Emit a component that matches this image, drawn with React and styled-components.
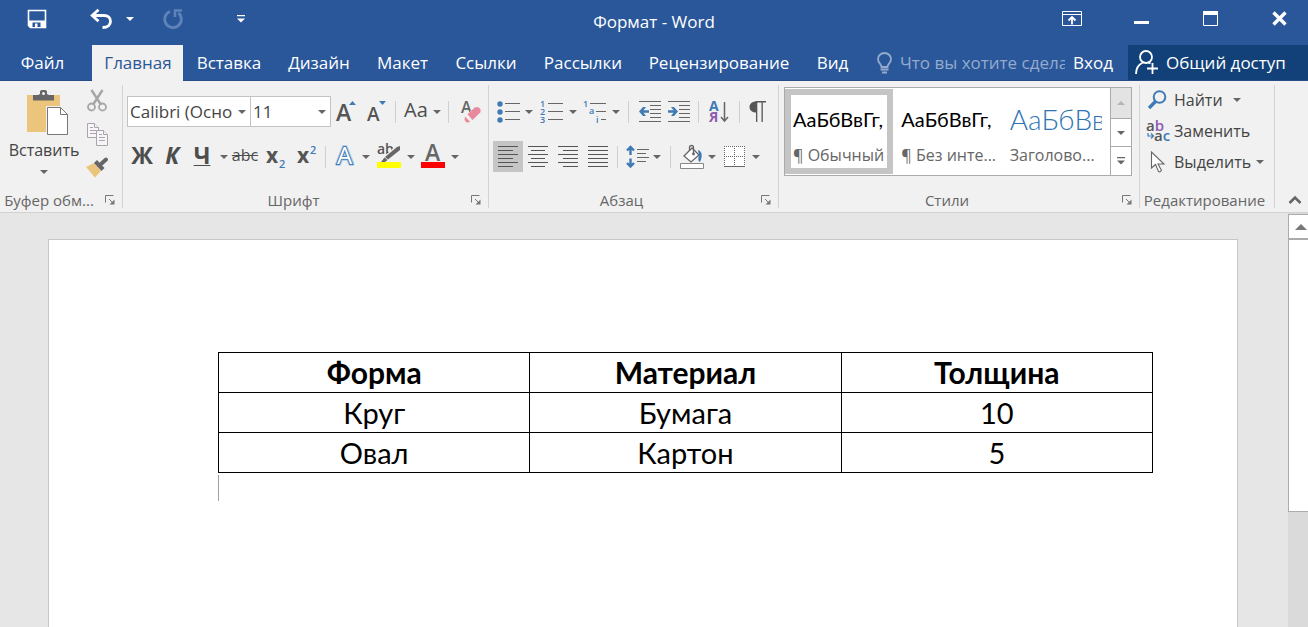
import { useState } from 'react';
import styled, { createGlobalStyle, css } from 'styled-components';

const GlobalStyle = createGlobalStyle`
    * {
        box-sizing: border-box;
    }

    body {
        margin: 0;
        font-family: 'Open Sans', 'Noto Sans', sans-serif;
        font-size: 16px;
        color: #444444;
    }

    button,
    input,
    select {
        margin: 0;
        padding: 0;
        border: 0;
        background: none;
        color: inherit;
        font: inherit;
    }

    svg {
        flex: none;
        overflow: visible;
    }
`;

const Window = styled.div`
    display: flex;
    flex-direction: column;
    height: 100vh;
    overflow: hidden;
    background: #e6e6e6;
`;

const TitleBar = styled.header`
    display: grid;
    grid-template-columns: 1fr auto 1fr;
    align-items: center;
    flex: none;
    height: 45px;
    padding-bottom: 8px;
    background: #2a579a;
    color: #ffffff;
`;

const Title = styled.h1`
    margin: 0;
    padding-top: 6px;
    font-size: 17px;
    font-weight: 400;
`;

const QuickAccess = styled.div`
    display: flex;
    align-items: center;
    padding-left: 20px;
`;

const WindowControls = styled.div`
    display: flex;
    justify-content: flex-end;
    gap: 11px;
`;

const IconButton = styled.button`
    display: flex;
    align-items: center;
    justify-content: center;
    flex: none;
    width: ${({ $width }) => $width}px;
    height: 32px;
    margin-right: ${({ $space = 0 }) => $space}px;
`;

const TabBar = styled.nav`
    display: flex;
    flex: none;
    height: 36px;
    background: #2a579a;
    border-bottom: 1px solid #244c88;
    color: #ffffff;
    font-size: 17px;
`;

const Tab = styled.button`
    flex: none;
    width: ${({ $width }) => $width}px;
    height: 36px;
    padding: 0 0 2px 1px;
    white-space: nowrap;

    &:first-child {
        margin-right: 8px;
    }

    ${({ $active }) =>
        $active &&
        css`
            background: #f1f1f1;
            color: #2a579a;
        `}
`;

const TellMe = styled.label`
    display: flex;
    flex: 1;
    align-items: center;
    gap: 7px;
    min-width: 0;
    padding-left: 14px;
`;

const TellMeInput = styled.input`
    flex: 1;
    width: 0;
    min-width: 0;
    outline: 0;

    &::placeholder {
        color: #94abcc;
        opacity: 1;
    }
`;

const SignIn = styled.button`
    flex: none;
    width: 56px;
`;

const Share = styled.button`
    display: flex;
    align-items: center;
    gap: 8px;
    flex: none;
    width: 180px;
    margin-left: 7px;
    padding-left: 7px;
    background: #124078;
    white-space: nowrap;
`;

const Ribbon = styled.section`
    display: flex;
    flex: none;
    height: 132px;
    padding: 4px 0;
    background: #f1f1f1;
    border-bottom: 1px solid #d2d2d2;
`;

const Group = styled.div`
    display: flex;
    flex-direction: column;
    justify-content: space-between;
    flex: ${({ $grow }) => ($grow ? '1 1 0' : 'none')};
    width: ${({ $width }) => $width}px;
    min-width: 0;
    border-right: 1px solid #d4d4d4;
`;

const GroupFooter = styled.div`
    display: flex;
    align-items: center;
    height: 16px;
    padding: 0 7px 0 2px;
    color: #666666;
    font-size: 15px;
    line-height: 16px;
`;

const GroupName = styled.span`
    flex: 1;
    text-align: center;
    white-space: nowrap;
`;

const Launcher = styled.button`
    display: flex;
    align-items: center;
    justify-content: flex-end;
    width: 19px;
    height: 16px;
`;

const Rows = styled.div`
    display: flex;
    flex-direction: column;
    gap: 14px;
    padding: 11px 0 0 4px;
`;

const Row = styled.div`
    display: flex;
    align-items: center;
    height: 31px;
`;

const Tool = styled.button`
    display: flex;
    align-items: center;
    justify-content: center;
    flex: none;
    width: ${({ $width = 30 }) => $width}px;
    height: 31px;
    background: ${({ $pressed }) => ($pressed ? '#c5c5c5' : 'none')};
    white-space: nowrap;
`;

const Separator = styled.span`
    display: flex;
    justify-content: center;
    flex: none;
    width: ${({ $width }) => $width}px;

    &::before {
        content: '';
        width: 1px;
        height: 22px;
        background: #d0d0d0;
    }
`;

const ComboBox = styled.label`
    display: grid;
    grid-template-columns: 1fr 17px;
    align-items: center;
    flex: none;
    width: ${({ $width }) => $width}px;
    height: 31px;
    margin-right: -1px;
    background: #ffffff;
    border: 1px solid #c3c3c3;
`;

const ComboSelect = styled.select`
    grid-area: 1 / 1 / 2 / 3;
    width: 100%;
    height: 29px;
    padding-left: 2px;
    appearance: none;
    font-size: 17px;
`;

const ComboArrow = styled.span`
    display: flex;
    justify-content: center;
    grid-area: 1 / 2;
    pointer-events: none;
`;

const Glyph = styled.span`
    padding-bottom: 3px;
    font-size: ${({ $size = 23 }) => $size}px;
    font-weight: ${({ $weight = 700 }) => $weight};
    font-style: ${({ $italic }) => ($italic ? 'italic' : 'normal')};
    text-decoration: ${({ $line = 'none' }) => $line};
    text-decoration-thickness: 1px;
    line-height: 28px;
    color: #4d4d4d;
`;

const Clipboard = styled.div`
    display: flex;
`;

const PasteButton = styled.button`
    display: flex;
    flex-direction: column;
    align-items: center;
    width: 84px;
    padding: 5px 0 0 4px;
    line-height: 30px;
`;

const PasteArrow = styled.span`
    display: flex;
    align-items: center;
    height: 14px;
`;

const ClipboardTools = styled.div`
    display: flex;
    flex-direction: column;
    align-items: center;
    gap: 1px;
    width: 26px;
`;

const Gallery = styled.div`
    display: flex;
    height: 89px;
    margin: 2px 7px 0 5px;
    background: #ffffff;
    border: 1px solid #ababab;
`;

const GalleryItem = styled.button`
    flex: 1 1 0;
    min-width: 0;
    height: 85px;
    margin-top: 1px;
    padding: 0 2px;
    border: 6px solid ${({ $selected }) => ($selected ? '#c5c5c5' : 'transparent')};
    text-align: left;
`;

const Preview = styled.div`
    overflow: hidden;
    height: 48px;
    color: ${({ $heading }) => ($heading ? '#2e74b5' : '#000000')};
    font-family: 'Lato', 'Open Sans', sans-serif;
    font-size: ${({ $heading }) => ($heading ? 28 : 20)}px;
    font-weight: ${({ $heading }) => ($heading ? 300 : 400)};
    line-height: 48px;
    white-space: nowrap;
`;

const StyleName = styled.div`
    color: #666666;
    line-height: 25px;
    white-space: nowrap;
`;

const GalleryNav = styled.div`
    display: grid;
    grid-template-rows: 30px 28px 29px;
    flex: none;
    width: 21px;
    border-left: 1px solid #ababab;
`;

const GalleryNavButton = styled.button`
    display: flex;
    align-items: center;
    justify-content: center;

    &:disabled {
        background: #e3e3e3;
    }

    & + & {
        border-top: 1px solid #ababab;
    }
`;

const EditingList = styled.div`
    display: flex;
    flex-direction: column;
    padding-left: 7px;
`;

const EditingButton = styled.button`
    display: flex;
    align-items: center;
    height: 31px;
    padding-bottom: 2px;
    white-space: nowrap;
`;

const EditingIcon = styled.span`
    display: flex;
    width: 27px;
`;

const EditingArrow = styled.span`
    display: flex;
    margin-left: ${({ $gap }) => $gap}px;
`;

const Collapse = styled.button`
    display: flex;
    align-items: flex-end;
    justify-content: flex-end;
    width: 33px;
    padding: 0 6px 3px 0;
`;

const Workspace = styled.main`
    display: flex;
    flex: 1;
    min-height: 0;
`;

const Canvas = styled.div`
    flex: 1;
    padding: 26px 50px 0 48px;
`;

const Page = styled.article`
    height: 100%;
    padding: 112px 84px 0 169px;
    background: #ffffff;
    border: 1px solid #c6c6c6;
    border-bottom: 0;
`;

const DataTable = styled.table`
    width: 100%;
    border-collapse: collapse;
    table-layout: fixed;
    color: #000000;
    font-family: 'Lato', 'Open Sans', sans-serif;
    font-size: 29px;
    line-height: 39px;

    th,
    td {
        height: 40px;
        padding: 0;
        border: 1px solid #000000;
        text-align: center;
    }

    th {
        font-size: 30px;
    }
`;

const Caret = styled.div`
    width: 1px;
    height: 26px;
    margin-top: 2px;
    background: #a0a0a0;
`;

const ScrollBar = styled.div`
    display: flex;
    flex-direction: column;
    flex: none;
    width: 20px;
    padding-top: 1px;
    background: #dadada;
`;

const ScrollButton = styled.button`
    display: flex;
    align-items: center;
    justify-content: center;
    height: 25px;
    padding-left: 4px;
    background: #ffffff;
    border: 1px solid #ababab;
    border-right: 0;
`;

const ScrollThumb = styled.div`
    height: 66%;
    background: #ffffff;
    border: 1px solid #ababab;
    border-right: 0;
`;

const BLUE = '#3f7ab5';
const GREY = '#666666';

const Arrow = ({ color = GREY, size = 8 }) => (
    <svg width={size} height={size / 2} viewBox="0 0 8 4" fill={color}>
        <path d="M0 0h8L4 4z" />
    </svg>
);

const ArrowTool = ({ width, label }) => (
    <Tool $width={width} aria-label={label}>
        <Arrow />
    </Tool>
);

const SaveIcon = () => (
    <svg width="20" height="20" viewBox="0 0 20 20" fill="none">
        <path d="M1.500 1.500h17v17H3.500l-2-2z" stroke="#fff" strokeWidth="1.600" />
        <path d="M1.500 11.500h17V19H3.500l-2-2z" fill="#fff" />
        <path d="M5.500 13.500h8V18h-8z" fill="#2a579a" />
        <path d="M8 14.500h2.500V19H8z" fill="#fff" />
    </svg>
);

const UndoIcon = () => (
    <svg width="22" height="20" viewBox="0 0 22 20" fill="none" stroke="#fff">
        <path d="M2 6.500h12c4 0 6.500 2.300 6.500 5.700S18 18.500 12.500 18.500" strokeWidth="2.800" />
        <path d="M8.500 0.800L2.200 6.500l6.300 5.700" strokeWidth="2.800" />
    </svg>
);

const RedoIcon = () => (
    <svg width="22" height="22" viewBox="0 0 22 22" fill="none" stroke="#5f83b8">
        <path d="M8 3.500A8.300 8.300 0 1 0 16.500 5" strokeWidth="2.800" />
        <path d="M13 9V2.500h7" strokeWidth="2.600" />
    </svg>
);

const CustomizeIcon = ({ color = '#fff' }) => (
    <svg width="10" height="8" viewBox="0 0 10 8" fill={color}>
        <path d="M1 0h8v1.200H1zM1 3.500h8L5 7.500z" />
    </svg>
);

const RibbonOptionsIcon = () => (
    <svg width="20" height="15" viewBox="0 0 20 15" fill="none" stroke="#fff">
        <path d="M.5.5h19v14H.5zM.5 3.500h19" />
        <path d="M10 13.500V7M6.500 9.500L10 6l3.500 3.500" strokeWidth="1.800" />
    </svg>
);

const MinimizeIcon = () => (
    <svg width="15" height="15" viewBox="0 0 15 15">
        <path d="M0 10h15v3H0z" fill="#fff" />
    </svg>
);

const MaximizeIcon = () => (
    <svg width="15" height="15" viewBox="0 0 15 15" fill="#fff">
        <path d="M.5.5h14v14H.5z" fill="none" stroke="#fff" />
        <path d="M0 0h15v4H0z" />
    </svg>
);

const CloseIcon = () => (
    <svg width="15" height="15" viewBox="0 0 15 15">
        <path d="M1.500 1.500l12 12M13.500 1.500l-12 12" stroke="#fff" strokeWidth="3.400" />
    </svg>
);

const BulbIcon = () => (
    <svg width="17" height="22" viewBox="0 0 17 22" fill="none" stroke="#94abcc" strokeWidth="1.800">
        <path d="M5.500 15c0-3-3.500-4-3.500-8a6.500 6 0 0 1 13 0c0 4-3.500 5-3.500 8z" />
        <path d="M4.500 17.500h8M6 20.500h5" strokeWidth="2" />
    </svg>
);

const ShareIcon = () => (
    <svg width="23" height="25" viewBox="0 0 23 25" fill="none" stroke="#fff" strokeWidth="1.800">
        <ellipse cx="11" cy="7" rx="6" ry="6" />
        <path d="M1 24c0-6 2.500-9.500 7-11.500M13.500 12.500l2 1" />
        <path d="M17.500 13v11M12 18.500h11" />
    </svg>
);

const PasteIcon = () => (
    <svg width="49" height="45" viewBox="-7 0 49 45" fill="none">
        <path d="M0 5h33v37H0z" fill="#ecc57c" />
        <path d="M6 5h5l2-1V1.500Q13 0 15 0h3q2 0 2 1.500V4l2 1h5v5.500H6z" fill={GREY} />
        <circle cx="16.500" cy="3.500" r="1.500" fill="#f1f1f1" />
        <path d="M19 16h16l8 8v21H19z" fill="#f1f1f1" />
        <path d="M20.500 17.500h13l7 7v20h-20z" fill="#fff" stroke="#777" />
        <path d="M33.500 17.500v7h7" stroke="#777" />
    </svg>
);

const CutIcon = () => (
    <svg width="20" height="22" viewBox="0 0 20 22" fill="none" stroke="#a6a6a6">
        <path d="M4.500 0l9 14M15.500 0l-9 14" strokeWidth="2.400" />
        <circle cx="4.500" cy="17" r="3.500" strokeWidth="1.800" />
        <circle cx="15.500" cy="17" r="3.500" strokeWidth="1.800" />
    </svg>
);

const CopyIcon = () => (
    <svg width="21" height="23" viewBox="0 0 21 23" fill="#f7f5f7" stroke="#aaa5ac">
        <path d="M.5.5h7l4 4v10H.5z" />
        <path d="M7.500.5v4h4M3 4.500h3M3 7.500h6M3 10.500h6" />
        <path d="M9.500 7.500h7l4 4v11h-11z" />
        <path d="M16.500 7.500v4h4M12 11.500h3M12 14.500h6M12 17.500h6" />
    </svg>
);

const PainterIcon = () => (
    <svg width="24" height="21" viewBox="0 0 24 21">
        <path d="M1 10l8-4 7 8-6 6.500z" fill="#ecc57c" />
        <path d="M9 6l3-3 7.500 8-3 3z" fill={GREY} />
        <path d="M16 7l5-4.500" stroke={GREY} strokeWidth="4" strokeLinecap="round" />
    </svg>
);

const LauncherIcon = () => (
    <svg width="10" height="10" viewBox="0 0 10 10" fill="none" stroke="#777">
        <path d="M.5 7.500v-7h8M4 4l4 4" />
        <path d="M9.500 4.500v5h-5z" fill="#777" stroke="none" />
    </svg>
);

const GrowFontIcon = ({ shrink }) => (
    <svg width="20" height="24" viewBox="0 0 20 24">
        <text x="0" y="21" fontSize={shrink ? 19 : 23} fontWeight="600" fill="#555">
            A
        </text>
        <path d={shrink ? 'M12 1h7l-3.500 4z' : 'M13 5h7l-3.500-4z'} fill={BLUE} />
    </svg>
);

const EraserIcon = () => (
    <svg width="20" height="23" viewBox="0 0 20 23">
        <text x="0" y="13" fontSize="16" fontWeight="600" fill={GREY}>
            A
        </text>
        <path
            d="M6.500 14.300L14 7.300h3.500l2 2v3l-8 7.700zM4 16.500l5 5-1.500 1H5.500L3.500 20z"
            fill="#e8899c"
            stroke="#f1f1f1"
            strokeWidth="1"
            paintOrder="stroke"
        />
    </svg>
);

const ScriptIcon = ({ sup }) => (
    <svg width="20" height="26" viewBox="0 0 20 26">
        <text x="0" y="19" fontSize="21" fontWeight="700" fill="#555">
            x
        </text>
        <text x="13" y={sup ? 10 : 24} fontSize="11" fontWeight="600" fill={BLUE}>
            2
        </text>
    </svg>
);

const EffectsIcon = () => (
    <svg width="20" height="24" viewBox="0 0 20 24">
        <text
            x="2"
            y="19"
            fontSize="24"
            fill="#fff"
            stroke="#b5d0ec"
            strokeWidth="4"
            strokeLinejoin="round"
            paintOrder="stroke"
        >
            A
        </text>
        <text x="2" y="19" fontSize="24" fill="#fff" stroke={BLUE} strokeWidth="2" paintOrder="stroke">
            A
        </text>
    </svg>
);

const HighlightIcon = () => (
    <svg width="24" height="25" viewBox="0 0 24 25">
        <text x="0" y="10" fontSize="14" fontWeight="600" fill="#555">
            ab
        </text>
        <path d="M22 3L10 14" stroke="#f1f1f1" strokeWidth="6" />
        <path d="M23 2v4L11 15.500l-3-2.500L20 3z" fill={GREY} />
        <path d="M7.500 13.500l3 2.500L8 18H4z" fill={GREY} />
        <path d="M0 18h24v6H0z" fill="#ffff00" />
    </svg>
);

const FontColorIcon = () => (
    <svg width="24" height="25" viewBox="0 0 24 25">
        <text x="4" y="17" fontSize="23" fontWeight="600" fill={GREY}>
            A
        </text>
        <path d="M0 18h24v6H0z" fill="#ff0000" />
    </svg>
);

const BulletsIcon = () => (
    <svg width="23" height="22" viewBox="0 0 23 22">
        <g fill={BLUE}>
            <circle cx="3" cy="3" r="2.700" />
            <circle cx="3" cy="11" r="2.700" />
            <circle cx="3" cy="19" r="2.700" />
        </g>
        <path d="M8 2.500h15M8 10.500h15M8 18.500h15" stroke={GREY} />
    </svg>
);

const NumberingIcon = () => (
    <svg width="23" height="24" viewBox="0 0 23 24">
        <g fill={BLUE} fontSize="9" fontWeight="600">
            <text x="0" y="7">1</text>
            <text x="0" y="15">2</text>
            <text x="0" y="23">3</text>
        </g>
        <path d="M8 3.500h15M8 11.500h15M8 19.500h15" stroke={GREY} />
    </svg>
);

const MultilevelIcon = () => (
    <svg width="24" height="24" viewBox="0 0 24 24">
        <g fill={BLUE} fontSize="9" fontWeight="600">
            <text x="0" y="7">1</text>
            <text x="6" y="14">a</text>
            <text x="13" y="23">i</text>
        </g>
        <path d="M7 3.500h16M13 11.500h10M18 19.500h5" stroke={GREY} />
    </svg>
);

const IndentIcon = ({ increase }) => (
    <svg width="22" height="22" viewBox="0 0 22 22">
        <path d="M0 .5h22M11 4.500h11M11 8.500h11M11 12.500h11M11 16.500h11M0 20.500h22" stroke={GREY} />
        <path
            d={
                increase
                    ? 'M0 9.300h5.500L3 6h3l4 4.500L6 15H3l2.500-3.300H0z'
                    : 'M10 9.300H4.500L7 6H4L0 10.500 4 15h3l-2.500-3.300H10z'
            }
            fill={BLUE}
        />
    </svg>
);

const SortIcon = () => (
    <svg width="20" height="24" viewBox="0 0 20 24">
        <text x="0" y="11" fontSize="14" fontWeight="700" fill={BLUE}>
            А
        </text>
        <text x="0" y="22" fontSize="14" fontWeight="700" fill="#8e5bb0">
            Я
        </text>
        <path d="M15.500 2v19M12 17l3.500 4 3.500-4" fill="none" stroke={GREY} strokeWidth="1.500" />
    </svg>
);

const PilcrowIcon = () => (
    <svg width="17" height="21" viewBox="0 0 17 21" fill="#555">
        <path d="M8 .5v11C3 11.500.5 9.500.5 6S3 .5 8 .5z" />
        <path d="M6.500 0H17v1.500H6.500zM7 0h1.300v21H7zM12.500 0h1.300v21h-1.300z" />
    </svg>
);

const ALIGN_PATHS = {
    left: 'M0 .5h20M0 4.500h15M0 8.500h20M0 12.500h15M0 16.500h20M0 20.500h15',
    center: 'M0 .5h20M3 4.500h14M0 8.500h20M3 12.500h14M0 16.500h20M3 20.500h14',
    right: 'M0 .5h20M5 4.500h15M0 8.500h20M5 12.500h15M0 16.500h20M5 20.500h15',
    justify: 'M0 .5h20M0 4.500h20M0 8.500h20M0 12.500h20M0 16.500h20M0 20.500h20',
};

const AlignIcon = ({ type }) => (
    <svg width="20" height="22" viewBox="0 0 20 22">
        <path d={ALIGN_PATHS[type]} stroke="#555" />
    </svg>
);

const LineSpacingIcon = () => (
    <svg width="23" height="24" viewBox="0 0 23 24" fill="none">
        <path d="M4.500 2v8M4.500 13.500v8M1 5.500L4.500 2 8 5.500M1 18l3.500 3.500L8 18" stroke={BLUE} strokeWidth="2.400" />
        <path d="M11 4.500h12M11 8.500h9M11 12.500h12M11 16.500h9" stroke={GREY} />
    </svg>
);

const ShadingIcon = () => (
    <svg width="25" height="24" viewBox="0 0 25 24" fill="none">
        <path d="M4 11l8-8 7 7-8 7z" fill="#fff" stroke={GREY} strokeWidth="1.300" />
        <path d="M9.500 6V2.500q0-2 2-2t2 2V9" stroke={GREY} strokeWidth="1.300" />
        <circle cx="13.500" cy="9" r="1.400" fill={GREY} />
        <path d="M18 5c4 1 5 6 2 12-2-1-2-3-1-7z" fill={BLUE} />
        <path d="M.5 18.500h23v5H.5z" fill="#fff" stroke="#888" />
    </svg>
);

const BordersIcon = () => (
    <svg width="21" height="22" viewBox="0 0 21 22">
        <path d="M0 0h21v21H0z" fill="#fff" />
        <path
            d="M.5 0v20M10.500 0v20M20.500 0v20M0 .5h21M0 10.500h21"
            stroke={GREY}
            strokeDasharray="1 1"
        />
        <path d="M0 20.500h21" stroke={GREY} />
    </svg>
);

const FindIcon = () => (
    <svg width="20" height="20" viewBox="0 0 20 20" fill="none" stroke={BLUE}>
        <circle cx="12.500" cy="7" r="5.800" strokeWidth="2" />
        <path d="M8.500 11.500L2 18" strokeWidth="3.400" />
    </svg>
);

const ReplaceIcon = () => (
    <svg width="24" height="22" viewBox="0 0 24 22" fontSize="15" fontWeight="600">
        <text x="-1" y="11" fill="#555">
            a<tspan fill="#8e5bb0">b</tspan>
        </text>
        <text x="7" y="21" fill="#555">
            a<tspan fill={BLUE}>c</tspan>
        </text>
        <path d="M1 13v3h5M4 13.500L6.500 16 4 18.500" fill="none" stroke={BLUE} strokeWidth="1.200" />
    </svg>
);

const SelectIcon = () => (
    <svg width="20" height="22" viewBox="0 0 20 22">
        <path
            d="M4.500 1v16l4-3.500 3 7q1.500 1 3-1l-3.500-6.500h6z"
            fill="#fff"
            stroke={GREY}
            strokeWidth="1.100"
        />
    </svg>
);

const TABS = [
    { name: 'Файл', width: 84 },
    { name: 'Главная', width: 91 },
    { name: 'Вставка', width: 91 },
    { name: 'Дизайн', width: 89 },
    { name: 'Макет', width: 78 },
    { name: 'Ссылки', width: 89 },
    { name: 'Рассылки', width: 105 },
    { name: 'Рецензирование', width: 167 },
    { name: 'Вид', width: 60 },
];

const STYLES = [
    { name: '¶ Обычный', preview: 'АаБбВвГг,' },
    { name: '¶ Без инте...', preview: 'АаБбВвГг,' },
    { name: 'Заголово...', preview: 'АаБбВв', heading: true },
];

const ALIGNMENTS = ['left', 'center', 'right', 'justify'];

const COLUMNS = ['Форма', 'Материал', 'Толщина'];
const DATA = [
    ['Круг', 'Бумага', '10'],
    ['Овал', 'Картон', '5'],
];

const Footer = ({ name, launcher = true }) => (
    <GroupFooter>
        <GroupName>{name}</GroupName>
        {launcher && (
            <Launcher aria-label={name}>
                <LauncherIcon />
            </Launcher>
        )}
    </GroupFooter>
);

function FontGroup() {
    return (
        <Group $width={366}>
            <Rows>
                <Row>
                    <ComboBox $width={124}>
                        <ComboSelect aria-label="Шрифт">
                            <option>Calibri (Осно</option>
                        </ComboSelect>
                        <ComboArrow>
                            <Arrow />
                        </ComboArrow>
                    </ComboBox>
                    <ComboBox $width={81}>
                        <ComboSelect aria-label="Размер шрифта">
                            <option>11</option>
                        </ComboSelect>
                        <ComboArrow>
                            <Arrow />
                        </ComboArrow>
                    </ComboBox>
                    <Tool $width={32} aria-label="Увеличить размер">
                        <GrowFontIcon />
                    </Tool>
                    <Tool aria-label="Уменьшить размер">
                        <GrowFontIcon shrink />
                    </Tool>
                    <Separator $width={7} />
                    <Tool $width={34}>
                        <Glyph $size={20} $weight={400}>Aa</Glyph>
                    </Tool>
                    <ArrowTool width={8} label="Регистр" />
                    <Separator $width={15} />
                    <Tool aria-label="Очистить формат">
                        <EraserIcon />
                    </Tool>
                </Row>
                <Row>
                    <Tool>
                        <Glyph>Ж</Glyph>
                    </Tool>
                    <Tool>
                        <Glyph $italic>К</Glyph>
                    </Tool>
                    <Tool>
                        <Glyph $line="underline">Ч</Glyph>
                    </Tool>
                    <ArrowTool width={13} label="Подчеркивание" />
                    <Tool>
                        <Glyph $size={16} $weight={400} $line="line-through">abc</Glyph>
                    </Tool>
                    <Tool $width={32} aria-label="Подстрочный">
                        <ScriptIcon />
                    </Tool>
                    <Tool aria-label="Надстрочный">
                        <ScriptIcon sup />
                    </Tool>
                    <Separator $width={7} />
                    <Tool $width={32} aria-label="Текстовые эффекты">
                        <EffectsIcon />
                    </Tool>
                    <ArrowTool width={10} label="Эффекты" />
                    <Tool $width={35} aria-label="Цвет выделения">
                        <HighlightIcon />
                    </Tool>
                    <ArrowTool width={10} label="Выбор выделения" />
                    <Tool $width={34} aria-label="Цвет шрифта">
                        <FontColorIcon />
                    </Tool>
                    <ArrowTool width={10} label="Выбор цвета" />
                </Row>
            </Rows>
            <Footer name="Шрифт" />
        </Group>
    );
}

function ParagraphGroup() {
    const [align, setAlign] = useState('left');

    return (
        <Group $width={290}>
            <Rows>
                <Row>
                    <Tool aria-label="Маркеры">
                        <BulletsIcon />
                    </Tool>
                    <ArrowTool width={12} label="Вид маркеров" />
                    <Tool $width={33} aria-label="Нумерация">
                        <NumberingIcon />
                    </Tool>
                    <ArrowTool width={10} label="Вид нумерации" />
                    <Tool $width={33} aria-label="Многоуровневый список">
                        <MultilevelIcon />
                    </Tool>
                    <ArrowTool width={10} label="Вид списка" />
                    <Separator $width={15} />
                    <Tool $width={28} aria-label="Уменьшить отступ">
                        <IndentIcon />
                    </Tool>
                    <Tool aria-label="Увеличить отступ">
                        <IndentIcon increase />
                    </Tool>
                    <Separator $width={8} />
                    <Tool $width={34} aria-label="Сортировка">
                        <SortIcon />
                    </Tool>
                    <Separator $width={6} />
                    <Tool aria-label="Отобразить все знаки">
                        <PilcrowIcon />
                    </Tool>
                </Row>
                <Row>
                    {ALIGNMENTS.map((type) => (
                        <Tool
                            key={type}
                            $pressed={type === align}
                            aria-label={type}
                            onClick={() => setAlign(type)}
                        >
                            <AlignIcon type={type} />
                        </Tool>
                    ))}
                    <Separator $width={9} />
                    <Tool aria-label="Интервал">
                        <LineSpacingIcon />
                    </Tool>
                    <ArrowTool width={10} label="Выбор интервала" />
                    <Separator $width={17} />
                    <Tool $width={26} aria-label="Заливка">
                        <ShadingIcon />
                    </Tool>
                    <ArrowTool width={14} label="Выбор заливки" />
                    <Tool aria-label="Границы">
                        <BordersIcon />
                    </Tool>
                    <ArrowTool width={14} label="Выбор границ" />
                </Row>
            </Rows>
            <Footer name="Абзац" />
        </Group>
    );
}

function StylesGroup() {
    const [selected, setSelected] = useState(STYLES[0].name);

    return (
        <Group $grow>
            <Gallery>
                {STYLES.map(({ name, preview, heading }) => (
                    <GalleryItem
                        key={name}
                        $selected={name === selected}
                        onClick={() => setSelected(name)}
                    >
                        <Preview $heading={heading}>{preview}</Preview>
                        <StyleName>{name}</StyleName>
                    </GalleryItem>
                ))}
                <GalleryNav>
                    <GalleryNavButton disabled aria-label="Вверх">
                        <svg width="8" height="4" viewBox="0 0 8 4" fill="#b5b5b5">
                            <path d="M0 4h8L4 0z" />
                        </svg>
                    </GalleryNavButton>
                    <GalleryNavButton aria-label="Вниз">
                        <Arrow />
                    </GalleryNavButton>
                    <GalleryNavButton aria-label="Дополнительно">
                        <CustomizeIcon color={GREY} />
                    </GalleryNavButton>
                </GalleryNav>
            </Gallery>
            <Footer name="Стили" />
        </Group>
    );
}

function EditingGroup() {
    return (
        <Group $width={135}>
            <EditingList>
                <EditingButton>
                    <EditingIcon>
                        <FindIcon />
                    </EditingIcon>
                    Найти
                    <EditingArrow $gap={10}>
                        <Arrow />
                    </EditingArrow>
                </EditingButton>
                <EditingButton>
                    <EditingIcon>
                        <ReplaceIcon />
                    </EditingIcon>
                    Заменить
                </EditingButton>
                <EditingButton>
                    <EditingIcon>
                        <SelectIcon />
                    </EditingIcon>
                    Выделить
                    <EditingArrow $gap={5}>
                        <Arrow />
                    </EditingArrow>
                </EditingButton>
            </EditingList>
            <Footer name="Редактирование" launcher={false} />
        </Group>
    );
}

function App() {
    const [activeTab, setActiveTab] = useState('Главная');

    return (
        <Window>
            <GlobalStyle />
            <TitleBar>
                <QuickAccess>
                    <IconButton $width={34} $space={22} aria-label="Сохранить">
                        <SaveIcon />
                    </IconButton>
                    <IconButton $width={50} aria-label="Отменить">
                        <UndoIcon />
                    </IconButton>
                    <IconButton $width={8} aria-label="Список отмены">
                        <Arrow color="#ffffff" />
                    </IconButton>
                    <IconButton $width={78} aria-label="Вернуть">
                        <RedoIcon />
                    </IconButton>
                    <IconButton $width={58} aria-label="Настройка панели">
                        <CustomizeIcon />
                    </IconButton>
                </QuickAccess>
                <Title>Формат - Word</Title>
                <WindowControls>
                    <IconButton $width={58} aria-label="Параметры ленты">
                        <RibbonOptionsIcon />
                    </IconButton>
                    <IconButton $width={58} aria-label="Свернуть">
                        <MinimizeIcon />
                    </IconButton>
                    <IconButton $width={58} aria-label="Развернуть">
                        <MaximizeIcon />
                    </IconButton>
                    <IconButton $width={58} aria-label="Закрыть">
                        <CloseIcon />
                    </IconButton>
                </WindowControls>
            </TitleBar>
            <TabBar>
                {TABS.map(({ name, width }) => (
                    <Tab
                        key={name}
                        $width={width}
                        $active={name === activeTab}
                        onClick={() => setActiveTab(name)}
                    >
                        {name}
                    </Tab>
                ))}
                <TellMe>
                    <BulbIcon />
                    <TellMeInput aria-label="Помощник" placeholder="Что вы хотите сдела" />
                </TellMe>
                <SignIn>Вход</SignIn>
                <Share>
                    <ShareIcon />
                    Общий доступ
                </Share>
            </TabBar>
            <Ribbon>
                <Group $width={123}>
                    <Clipboard>
                        <PasteButton>
                            <PasteIcon />
                            Вставить
                            <PasteArrow>
                                <Arrow />
                            </PasteArrow>
                        </PasteButton>
                        <ClipboardTools>
                            <IconButton $width={26} aria-label="Вырезать">
                                <CutIcon />
                            </IconButton>
                            <IconButton $width={26} aria-label="Копировать">
                                <CopyIcon />
                            </IconButton>
                            <IconButton $width={26} aria-label="Формат по образцу">
                                <PainterIcon />
                            </IconButton>
                        </ClipboardTools>
                    </Clipboard>
                    <Footer name="Буфер обм..." />
                </Group>
                <FontGroup />
                <ParagraphGroup />
                <StylesGroup />
                <EditingGroup />
                <Collapse aria-label="Свернуть ленту">
                    <svg width="14" height="10" viewBox="0 0 14 10" fill="none">
                        <path d="M1.500 8L7 2.500 12.500 8" stroke={GREY} strokeWidth="2.600" />
                    </svg>
                </Collapse>
            </Ribbon>
            <Workspace>
                <Canvas>
                    <Page>
                        <DataTable>
                            <thead>
                                <tr>
                                    {COLUMNS.map((column) => (
                                        <th key={column}>{column}</th>
                                    ))}
                                </tr>
                            </thead>
                            <tbody>
                                {DATA.map((row) => (
                                    <tr key={row[0]}>
                                        {row.map((cell) => (
                                            <td key={cell}>{cell}</td>
                                        ))}
                                    </tr>
                                ))}
                            </tbody>
                        </DataTable>
                        <Caret />
                    </Page>
                </Canvas>
                <ScrollBar>
                    <ScrollButton aria-label="Прокрутить вверх">
                        <svg width="12" height="6" viewBox="0 0 12 6" fill="#777">
                            <path d="M0 6h12L6 0z" />
                        </svg>
                    </ScrollButton>
                    <ScrollThumb />
                </ScrollBar>
            </Workspace>
        </Window>
    );
}

export default App;
